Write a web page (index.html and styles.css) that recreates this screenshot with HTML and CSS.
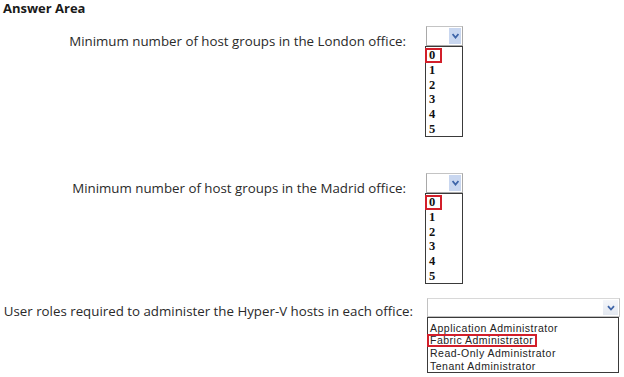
FILE: index.html
```html
<!DOCTYPE html>
<html>
<head>
<meta charset="utf-8">
<link rel="stylesheet" href="styles.css">
</head>
<body>
<div class="page">
  <h1 class="title">Answer Area</h1>

  <div class="row row-london">
    <div class="label label-num">Minimum number of host groups in the London office:</div>
    <div class="dropdown dropdown-num">
      <div class="combo combo-num"><span class="btn btn-num"><svg width="7" height="6" viewBox="0 0 7 6"><path d="M0.5 1 L3.5 4.5 L6.5 1" fill="none" stroke="#3d64a8" stroke-width="1.8"/></svg></span></div>
      <ul class="list list-num">
        <li><span class="pick pick-num">0</span></li>
        <li>1</li>
        <li>2</li>
        <li>3</li>
        <li>4</li>
        <li>5</li>
      </ul>
    </div>
  </div>

  <div class="row row-madrid">
    <div class="label label-num">Minimum number of host groups in the Madrid office:</div>
    <div class="dropdown dropdown-num">
      <div class="combo combo-num"><span class="btn btn-num"><svg width="7" height="6" viewBox="0 0 7 6"><path d="M0.5 1 L3.5 4.5 L6.5 1" fill="none" stroke="#3d64a8" stroke-width="1.8"/></svg></span></div>
      <ul class="list list-num">
        <li><span class="pick pick-num">0</span></li>
        <li>1</li>
        <li>2</li>
        <li>3</li>
        <li>4</li>
        <li>5</li>
      </ul>
    </div>
  </div>

  <div class="row row-roles">
    <div class="label label-roles">User roles required to administer the Hyper-V hosts in each office:</div>
    <div class="dropdown dropdown-roles">
      <div class="combo combo-roles"><span class="btn btn-roles"><svg width="8" height="6" viewBox="0 0 8 6"><path d="M1 1.2 L4 4.5 L7 1.2" fill="none" stroke="#3d64a8" stroke-width="1.8"/></svg></span></div>
      <ul class="list list-roles">
        <li>Application Administrator</li>
        <li><span class="pick pick-roles">Fabric Administrator</span></li>
        <li>Read-Only Administrator</li>
        <li>Tenant Administrator</li>
      </ul>
    </div>
  </div>
</div>
</body>
</html>
```

FILE: styles.css
```css
html, body {
  margin: 0;
  padding: 0;
  background: #ffffff;
}

.page {
  width: 624px;
  height: 377px;
  font-family: "Open Sans", "Noto Sans", sans-serif;
  color: #222;
  overflow: hidden;
}

.title {
  margin: 0;
  padding: 0 0 0 3px;
  font-size: 13px;
  line-height: 16px;
  font-weight: 700;
  color: #1a1a1a;
}

.row {
  display: flex;
  align-items: flex-start;
}

.row-london { margin-top: 10px; }
.row-madrid { margin-top: 36px; }
.row-roles { margin-top: 14px; }

.label {
  text-align: right;
  font-size: 13.3px;
  line-height: 18px;
  color: #2a2a2a;
  white-space: nowrap;
}

.label-num {
  width: 406px;
  margin-right: 19px;
  margin-top: 6px;
}

.label-roles {
  width: 413px;
  margin-right: 14px;
  margin-top: 4px;
}

.dropdown {
  display: flex;
  flex-direction: column;
}

.combo {
  box-sizing: border-box;
  display: flex;
  justify-content: flex-end;
  align-items: stretch;
  background: #fff;
}

.combo-num {
  width: 37px;
  height: 20px;
  margin-left: 1px;
  border: 1px solid #a9a9a9;
  border-top-color: #c4c4c4;
  padding: 1px;
}

.btn {
  display: flex;
  align-items: center;
  justify-content: center;
}

.btn-num {
  width: 12px;
  background: #c9d7f0;
}

.combo-roles {
  width: 193px;
  height: 19px;
  border: 1px solid #c2c2c2;
  border-top-color: #d8d8d8;
  padding: 1px;
}

.btn-roles {
  width: 15px;
  background: linear-gradient(#f4f6fa, #e3e8f0);
}

.list {
  list-style: none;
  margin: 0;
  box-sizing: border-box;
  border: 1px solid #3a3a3a;
  background: #fff;
}

.list-num {
  width: 38px;
  height: 91px;
  padding: 1px 0 0 3px;
  font-family: "Liberation Serif", "DejaVu Serif", serif;
  font-weight: 700;
  font-size: 12.5px;
  line-height: 14.7px;
  color: #111;
}

.list-roles {
  width: 192px;
  height: 56px;
  padding: 4px 0 0 2px;
  font-family: "Liberation Sans", "Arial", sans-serif;
  font-size: 10.5px;
  line-height: 12.3px;
  letter-spacing: 0.5px;
  color: #222;
}

.pick {
  display: inline-block;
  box-sizing: border-box;
  border: 2px solid #d21f2a;
}

.pick-num {
  width: 17px;
  height: 15px;
  line-height: 11px;
  margin-left: -4px;
  padding-left: 2px;
}

.pick-roles {
  width: 110px;
  height: 13px;
  line-height: 9px;
  margin-left: -3px;
  padding-left: 1px;
}
```
